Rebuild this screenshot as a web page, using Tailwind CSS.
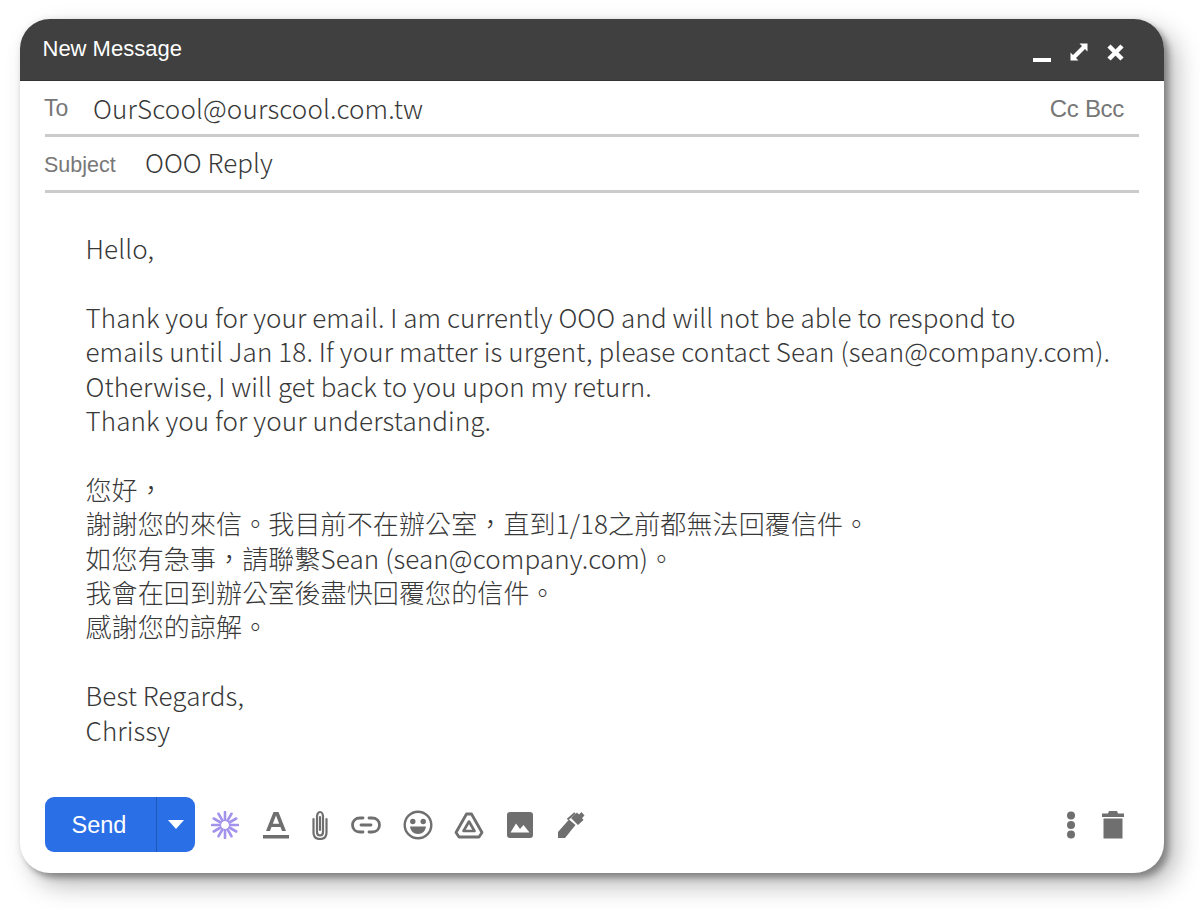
<!doctype html>
<html lang="zh-Hant">
<head>
<meta charset="utf-8">
<script src="https://cdn.jsdelivr.net/npm/@tailwindcss/browser@4"></script>
</head>
<body class="bg-white">
<div class="w-[1200px] h-[909px] pt-[19px] pl-[20px] overflow-hidden font-['Liberation_Sans',sans-serif]">
  <div class="w-[1144px] h-[854px] rounded-[30px] bg-white shadow-[5px_5px_6px_rgba(0,0,0,0.3),12px_12px_26px_rgba(0,0,0,0.28),0_0_6px_rgba(0,0,0,0.08)] flex flex-col overflow-hidden">
    <header class="h-[62px] shrink-0 bg-[#404040] border-b border-[#333] flex items-start justify-between pl-[22.500px] pr-[39px]">
      <span class="text-white text-[22px] leading-[26px] mt-[17px]">New Message</span>
      <div class="flex items-center gap-[17px] mt-[21px] text-white">
        <svg class="w-[20px] h-[24px]" viewBox="0 0 20 24"><rect x="1" y="18" width="18" height="4" fill="#fff"/></svg>
        <svg class="w-[20px] h-[20px]" viewBox="0 0 20 20"><path d="M18.500 1.500 H10.500 L13 4 L4 13 L1.500 10.500 V18.500 H9.500 L7 16 L16 7 L18.500 9.500 Z" fill="#fff"/></svg>
        <svg class="w-[19px] h-[19px]" viewBox="0 0 19 19"><path d="M3 3 L16 16 M16 3 L3 16" stroke="#fff" stroke-width="4.500"/></svg>
      </div>
    </header>
    <div class="mx-[25px] w-[1094px] h-[56px] shrink-0 border-b-[3px] border-[#cbcbcb] flex items-center justify-between">
      <div class="flex items-center">
        <span class="text-[23px] text-[#777] w-[48px] -ml-[1px] mr-[1px] mt-[2px]">To</span>
        <span class="font-['Noto_Sans_CJK_TC',sans-serif] font-light tracking-[0.15px] text-[26px] text-[#383838]">OurScool@ourscool.com.tw</span>
      </div>
      <span class="text-[24px] text-[#777] tracking-[-0.3px] mr-[15px] mt-[2px]">Cc Bcc</span>
    </div>
    <div class="mx-[25px] w-[1094px] h-[56px] shrink-0 border-b-[3px] border-[#cbcbcb] flex items-center pb-[5px]">
      <span class="text-[21.500px] text-[#777] w-[101px] -ml-[1px] mt-[8px]">Subject</span>
      <span class="font-['Noto_Sans_CJK_TC',sans-serif] font-light tracking-[0.05px] text-[26px] text-[#383838]">OOO Reply</span>
    </div>
    <div class="pl-[65.500px] pt-[38px] flex-1 font-['Noto_Sans_CJK_TC',sans-serif] font-light tracking-[0.12px] text-[26px] leading-[34.400px] text-[#383838] whitespace-nowrap">
      <p>Hello,</p>
      <p>&nbsp;</p>
      <p class="tracking-[0.08px]">Thank you for your email. I am currently OOO and will not be able to respond to</p>
      <p>emails until Jan 18. If your matter is urgent, please contact Sean (sean@company.com).</p>
      <p class="tracking-[0.08px]">Otherwise, I will get back to you upon my return.</p>
      <p class="tracking-[0.09px]">Thank you for your understanding.</p>
      <p>&nbsp;</p>
      <p>您好，</p>
      <p>謝謝您的來信。我目前不在辦公室，直到1/18之前都無法回覆信件。</p>
      <p>如您有急事，請聯繫Sean (sean@company.com)。</p>
      <p>我會在回到辦公室後盡快回覆您的信件。</p>
      <p>感謝您的諒解。</p>
      <p>&nbsp;</p>
      <p>Best Regards,</p>
      <p>Chrissy</p>
    </div>
    <footer class="h-[76px] shrink-0 pl-[24.500px] pr-[40px] flex items-start justify-between">
      <div class="flex items-center">
        <div class="flex w-[150px] h-[55px] rounded-[9px] bg-[#2b6fe6] text-white">
          <span class="w-[112px] border-r border-[#1f58bd] flex items-center justify-center text-[23.500px] pr-[2px] pt-[2px]">Send</span>
          <span class="flex-1 flex items-center justify-center"><svg class="w-[16px] h-[9px]" viewBox="0 0 16 9"><path d="M0 0H16L8 9Z" fill="#fff"/></svg></span>
        </div>
        <div class="flex items-center h-[55px] text-[#6f6f6f]">
          <svg class="ml-[16.500px] w-[28px] h-[28px]" viewBox="0 0 28 28" stroke="#a393ec" stroke-width="2.600" stroke-linecap="round"><path d="M14 1V9M14 19V27M1 14H9M19 14H27M16.500 9.670L20.500 2.740M11.500 18.330L7.500 25.260M11.500 9.670L7.500 2.740M16.500 18.330L20.500 25.260M18.330 11.500L25.260 7.500M9.670 16.500L2.740 20.500M18.330 16.500L25.260 20.500M9.670 11.500L2.740 7.500"/></svg>
          <svg class="ml-[22.500px] w-[28px] h-[28px]" viewBox="0 0 28 28" fill="#6f6f6f"><path d="M11.500 1H16.500L24 20H20L18.500 16H9.500L8 20H4ZM10.800 12.800H17.200L14 4.500Z" fill-rule="evenodd"/><rect x="1" y="24" width="26" height="3.500"/></svg>
          <svg class="ml-[20px] w-[20px] h-[30px]" viewBox="0 0 20 30" fill="none" stroke="#6f6f6f" stroke-width="2.200" stroke-linecap="round"><path d="M13 9V22C13 24 11.700 25.500 10 25.500C8.300 25.500 7 24 7 22V6.500C7 4 8.300 2 10 2C11.700 2 13 4 13 6.500V9M10 7V20"/><path d="M16.500 9V22.500C16.500 26.500 14 29 10 29C6 29 3.500 26.500 3.500 22.500V9"/></svg>
          <svg class="ml-[21px] w-[30px] h-[18px]" viewBox="0 0 30 18" fill="none" stroke="#6f6f6f" stroke-width="2.800" stroke-linecap="round"><path d="M12 2H9C4.500 2 1.500 5 1.500 9C1.500 13 4.500 16 9 16H12M18 2H21C25.500 2 28.500 5 28.500 9C28.500 13 25.500 16 21 16H18M10 9H20"/></svg>
          <svg class="ml-[22px] w-[30px] h-[30px]" viewBox="0 0 30 30"><circle cx="15" cy="15" r="13.300" fill="none" stroke="#6f6f6f" stroke-width="2.400"/><circle cx="9.800" cy="11.500" r="2.700" fill="#6f6f6f"/><circle cx="20.200" cy="11.500" r="2.700" fill="#6f6f6f"/><path d="M7 16.500H23C22.500 21 19.500 24 15 24C10.500 24 7.500 21 7 16.500Z" fill="#6f6f6f"/></svg>
          <svg class="ml-[21px] w-[30px] h-[28px]" viewBox="0 0 30 28" fill="none" stroke="#6f6f6f" stroke-width="2.800" stroke-linejoin="round"><path d="M12.500 3H17.500L28 21.500L25 26H5L2 21.500Z"/><path d="M15 10.500L20.500 20H9.500Z" stroke-width="2.600"/></svg>
          <svg class="ml-[23px] w-[26px] h-[26px]" viewBox="0 0 26 26"><rect width="26" height="26" rx="3" fill="#6f6f6f"/><path d="M3.500 20.500L9 11.500L13 17L16.500 13L22.500 20.500Z" fill="#fff"/></svg>
          <svg class="ml-[24px] w-[28px] h-[28px]" viewBox="0 0 28 28" fill="#6f6f6f"><path d="M1 27V21L12 8.500L18.500 14L8 27Z"/><path d="M14 7L20 1.500L22 3.500L24.500 1L27.500 4.500L25 7L26.500 9L21 14Z"/><path d="M18 2L10.500 8.500" stroke="#6f6f6f" stroke-width="2" fill="none"/></svg>
        </div>
      </div>
      <div class="flex items-center h-[55px] gap-[26px]">
        <svg class="w-[10px] h-[28px]" viewBox="0 0 10 28" fill="#6f6f6f"><circle cx="5" cy="4.500" r="4"/><circle cx="5" cy="14" r="4"/><circle cx="5" cy="23.500" r="4"/></svg>
        <svg class="w-[22px] h-[28px]" viewBox="0 0 22 28" fill="#6f6f6f"><path d="M7 0H15L16 2.500H22V6H0V2.500H6Z"/><rect x="1.500" y="7.500" width="19" height="20"/></svg>
      </div>
    </footer>
  </div>
</div>
</body>
</html>
